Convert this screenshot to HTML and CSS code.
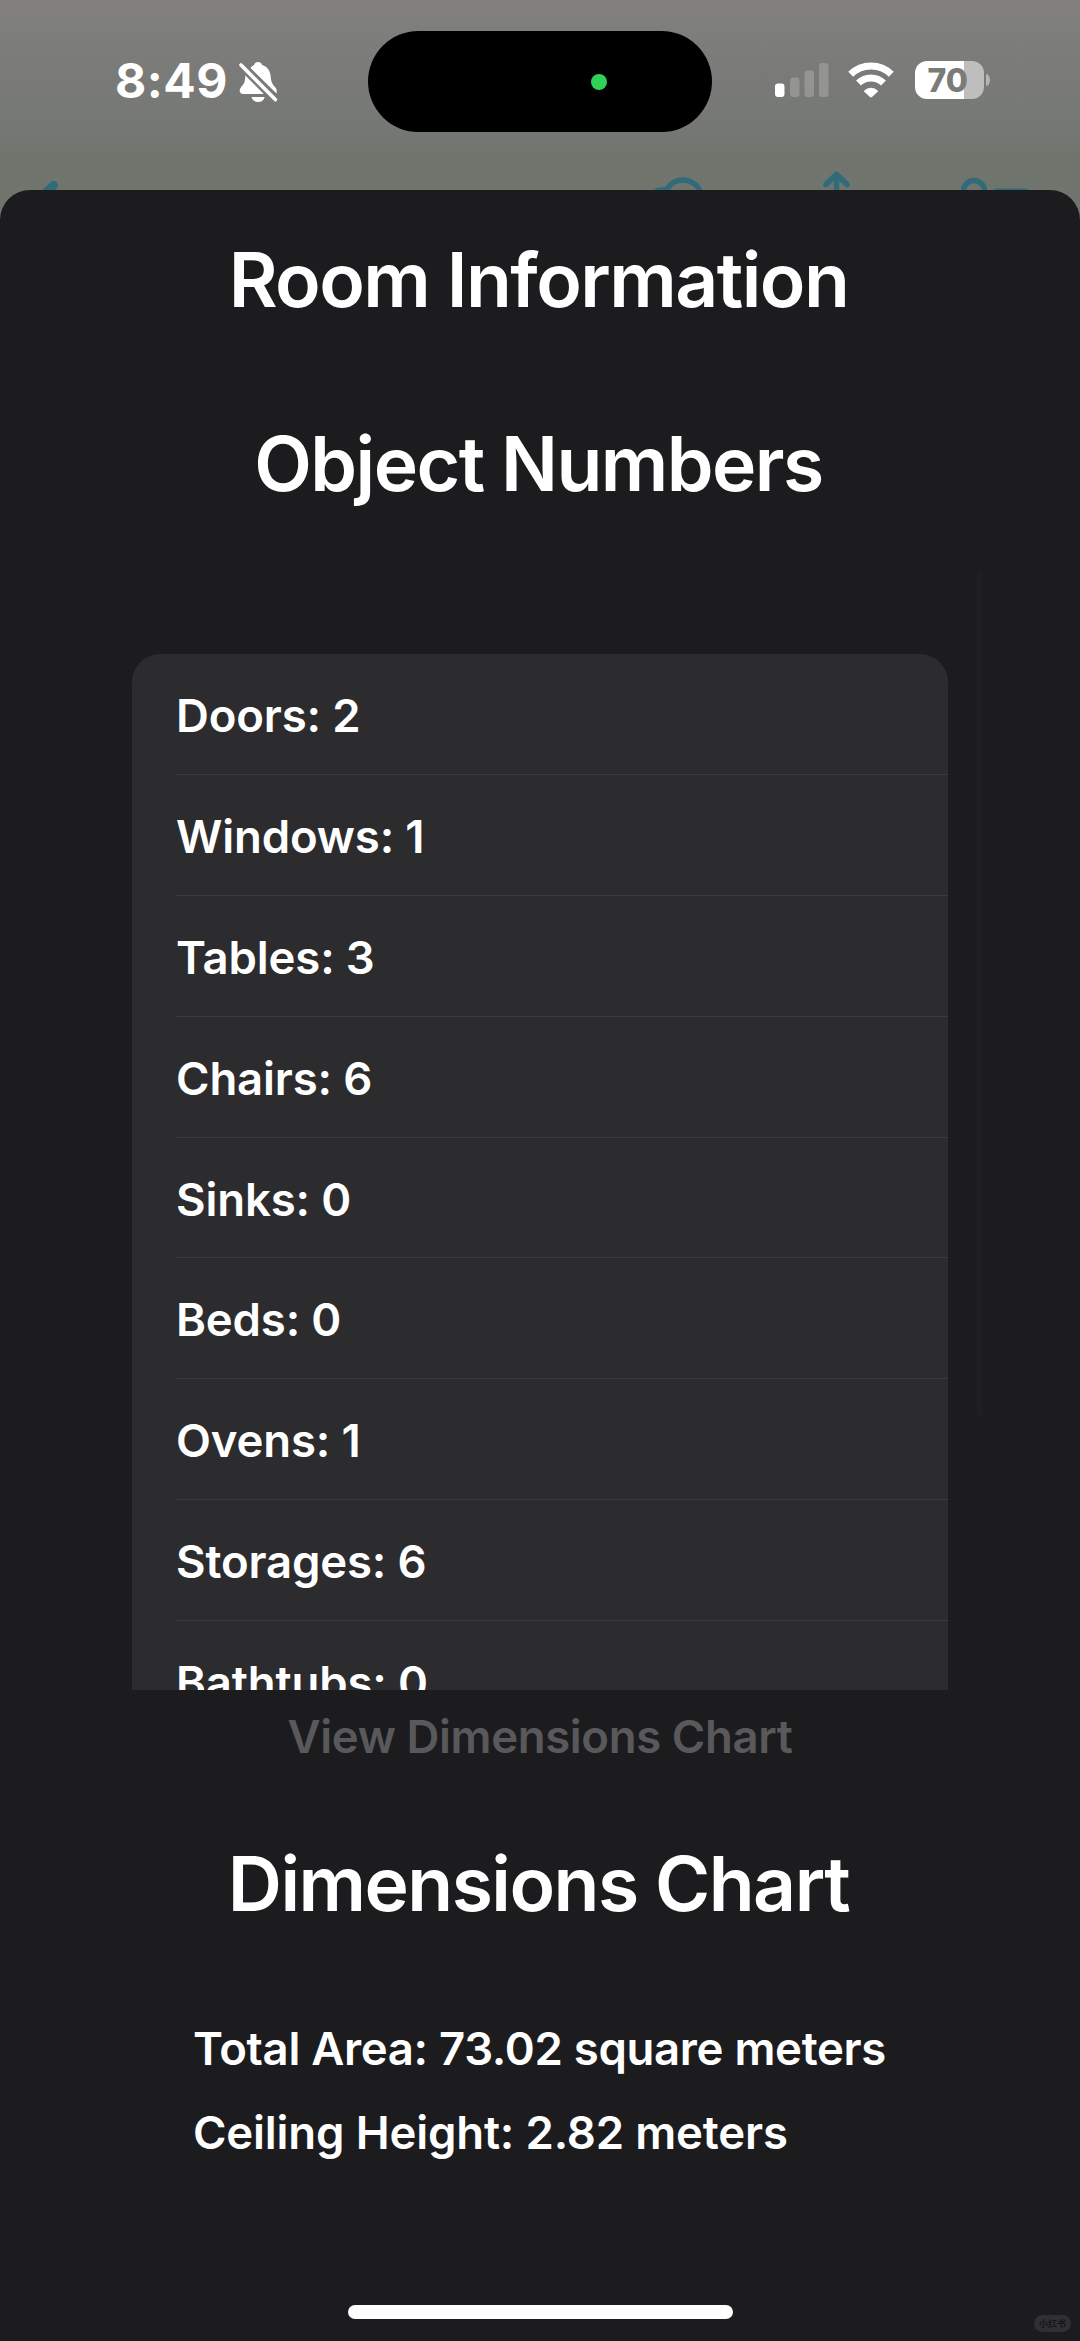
FILE: index.html
```
<!DOCTYPE html>
<html lang="en">
<head>
<meta charset="utf-8">
<title>Room Information</title>
<link rel="stylesheet" href="styles.css">
</head>
<body>
<div class="screen">
  <header class="backdrop">
    <div class="clock">
      <span class="time">8:49</span>
      <svg class="bell" width="40" height="42" viewBox="0 0 40 42">
        <path fill="#fff" d="M12.500 8C14 6.200 15.200 5.400 16 5C16.600 3 18 2 20 2s3.600 1 4.200 3c5 1.500 8 5.500 8.500 11.500c.5 5.500 1.500 7.500 4.300 10.500c1.800 2 2 4 1.500 6.500z"/>
        <path fill="#fff" d="M7.300 15L26 34H5.500C1.500 34 .5 30 3 27.200C6.500 23.500 7.300 21 7.300 15zM13.500 37h13.200c-.8 3.200-3.300 5-6.600 5s-5.800-1.800-6.600-5z"/>
        <path stroke="#7a7b78" stroke-width="8.500" d="M1 3L39 41"/>
        <path stroke="#fff" stroke-width="3.600" stroke-linecap="round" d="M3 5L37.300 39.600"/>
      </svg>
    </div>
    <div class="island"><span class="dot"></span></div>
    <div class="indicators">
      <svg width="54" height="36" viewBox="0 0 54 36">
        <rect x="0" y="21.500" width="9.500" height="13.500" rx="3" fill="#fff"/>
        <g fill="#93958f"><rect x="15" y="15.500" width="9.500" height="19.500" rx="3"/><rect x="29.500" y="8.500" width="9.500" height="26.500" rx="3"/><rect x="44" y="1" width="9.500" height="34" rx="3"/></g>
      </svg>
      <svg class="wifi" width="46" height="36" viewBox="0 0 46 36">
        <g fill="none" stroke="#fff" stroke-width="7"><path d="M2.700 12.300a29 29 0 0 1 40.600 0"/><path d="M10.500 21a18 18 0 0 1 25 0"/></g>
        <path fill="#fff" d="M16.300 28.400a10 10 0 0 1 13.400 0q.6.7 0 1.300l-5.700 5.300q-1 .9-2 0l-5.700-5.300q-.6-.6 0-1.300z"/>
      </svg>
      <div class="battery">70</div>
      <span class="nub"></span>
    </div>
    <svg class="toolbar" width="1080" height="20" viewBox="0 170 1080 20">
      <g fill="none" stroke="#2f6b7b" stroke-width="5.500" stroke-linecap="round" stroke-linejoin="round">
        <path stroke-width="9" d="M53.500 185.500L40 199"/>
        <path d="M654 192.500q6-4 13-2.700c3-6 9-9.800 16-9.800c8 0 15 5 17 12"/>
        <path d="M836.500 196v-21M826 184.500l10.500-10.300l10.500 10.300"/>
        <circle cx="974" cy="191" r="10.500"/>
        <path stroke-width="3" d="M996 190h31"/>
      </g>
    </svg>
  </header>
  <main class="sheet">
    <h1 class="title">Room Information</h1>
    <h2 class="title">Object Numbers</h2>
    <section class="scroller">
      <ul class="list">
        <li>Doors: 2</li>
        <li>Windows: 1</li>
        <li>Tables: 3</li>
        <li>Chairs: 6</li>
        <li>Sinks: 0</li>
        <li>Beds: 0</li>
        <li>Ovens: 1</li>
        <li>Storages: 6</li>
        <li>Bathtubs: 0</li>
      </ul>
      <span class="track"></span>
    </section>
    <button class="view" disabled>View Dimensions Chart</button>
    <h2 class="title chart">Dimensions Chart</h2>
    <div class="facts">
      <p>Total Area: 73.02 square meters</p>
      <p class="ceiling">Ceiling Height: 2.82 meters</p>
    </div>
    <span class="home"></span>
    <span class="badge">小红书</span>
  </main>
</div>
</body>
</html>
```
FILE: styles.css
```
* { box-sizing: border-box; margin: 0; padding: 0; }
body { background: #1c1c1e; font-family: Inter, "Noto Sans CJK SC", sans-serif; color: #fff; }
.screen { position: relative; width: 1080px; height: 2341px; overflow: hidden;
  background: linear-gradient(#82817f 0, #7c7c7a 50px, #777976 110px, #71746d 160px, #6f756d 190px); }

.backdrop { position: relative; display: grid; grid-template-columns: 368px 344px 1fr; height: 190px; padding-top: 31px; align-items: start; }
.clock { display: flex; padding: 29px 0 0 115px; }
.time { width: 123px; font-size: 48px; font-weight: 700; line-height: 41px; letter-spacing: 0.5px; }
.bell { display: block; }
.island { display: flex; align-items: center; height: 101px; padding-left: 222.500px; background: #000; border-radius: 51px; }
.dot { width: 16px; height: 16px; border-radius: 50%; background: #30d158; }
.indicators { display: flex; align-items: center; height: 38px; margin: 30px 0 0 62.500px; }
.indicators svg { display: block; }
.indicators .wifi { margin: 0 20.500px 0 19.500px; }
.battery { width: 69px; height: 38px; border-radius: 12px; padding-left: 13px; font-size: 32px; font-weight: 800; line-height: 39px;
  color: #7b7c79; background: linear-gradient(90deg, #fff 49px, #bebebd 49px); }
.nub { width: 4px; height: 12px; margin-left: 2px; border-radius: 0 4px 4px 0 / 0 6px 6px 0; background: #b5b6b4; }
.toolbar { position: absolute; left: 0; top: 170px; overflow: hidden; }

.sheet { display: flex; flex-direction: column; height: 2151px; padding-top: 44.700px; background: #1c1c1e; border-radius: 30px 30px 0 0; }
.title { height: 90px; padding-right: 3px; font-size: 75px; font-weight: 600; line-height: 90px; letter-spacing: -1.530px; text-align: center; }
h2.title { margin-top: 93.700px; line-height: 91px; }
.scroller { display: flex; height: 1128px; margin-top: 53.600px; overflow: hidden; }
.list { width: 816px; margin: 92px 0 0 132px; padding-left: 44px; list-style: none; background: #2c2c2e; border-radius: 28px 28px 0 0; }
.list li { height: 120.900px; font-size: 45.500px; font-weight: 600; line-height: 123.500px; letter-spacing: -0.150px; border-bottom: 1.500px solid #3b3b3d; }
.track { width: 5px; height: 846px; margin: 8px 0 0 29px; background: #1f1f21; border-radius: 3px; }
.view { height: 60px; margin-top: 17.500px; border: 0; background: none; color: #59595c; font: 600 45.500px/60px Inter, sans-serif; letter-spacing: -0.370px; text-align: center; }
h2.chart { margin-top: 70.200px; }
.facts { display: flex; flex-direction: column; gap: 24px; margin: 91px 0 0 193px; font-size: 45.500px; font-weight: 600; line-height: 60px; letter-spacing: -0.300px; }
.ceiling { letter-spacing: -0.160px; }
.home { width: 385px; height: 14px; margin: 142.500px 0 0 348px; border-radius: 7px; background: #fff; flex: none; }
.badge { position: absolute; right: 9px; bottom: 9px; width: 37px; height: 17px; border-radius: 9px; background: #303032; color: #161618;
  font-size: 9px; font-weight: 700; line-height: 17px; text-align: center; }
```
